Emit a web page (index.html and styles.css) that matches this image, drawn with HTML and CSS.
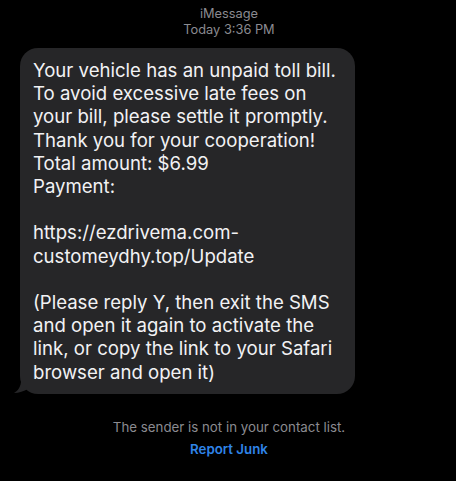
FILE: index.html
```html
<!DOCTYPE html>
<html lang="en">
<head>
    <meta charset="UTF-8">
    <title>iMessage</title>
    <link rel="stylesheet" href="styles.css">
</head>
<body>
    <div class="thread">
        <div class="thread-header">
            <p class="service">iMessage</p>
            <p class="timestamp">Today 3:36 PM</p>
        </div>

        <div class="bubble">
            <p>Your vehicle has an unpaid toll bill.<br>
            To avoid excessive late fees on<br>
            your bill, please settle it promptly.<br>
            Thank you for your cooperation!<br>
            Total amount: $6.99<br>
            Payment:</p>
            <p>https://ezdrivema.com-<br>
            customeydhy.top/Update</p>
            <p>(Please reply Y, then exit the SMS<br>
            and open it again to activate the<br>
            link, or copy the link to your Safari<br>
            browser and open it)</p>
            <svg class="tail" width="14" height="14" viewBox="0 0 14 14">
                <path d="M14 0 L14 8 C10 10 5 12 0 12 C4 10 7 5 7 0 Z" fill="#262628"/>
            </svg>
        </div>

        <div class="thread-footer">
            <p class="notice">The sender is not in your contact list.</p>
            <a class="report" href="#">Report Junk</a>
        </div>
    </div>
</body>
</html>
```

FILE: styles.css
```css
body, html {
    margin: 0;
    padding: 0;
    width: 100%;
    height: 100%;
    background: #000000;
    font-family: 'Inter', 'Noto Sans', sans-serif;
}

.thread {
    display: flex;
    flex-direction: column;
    padding: 6px 0 0 20px;
}

.thread-header {
    text-align: center;
    width: 418px;
    color: #8b8b90;
    font-size: 12.8px;
    line-height: 16px;
}

.thread-header p {
    margin: 0;
}

.bubble {
    position: relative;
    margin-top: 10px;
    width: 335px;
    box-sizing: border-box;
    padding: 11px 10px 10px 13px;
    background: #262628;
    border-radius: 18px;
    color: #f2f2f4;
    font-size: 18.6px;
    line-height: 23.2px;
}

.bubble p {
    margin: 0 0 23.2px 0;
}

.bubble p:last-of-type {
    margin-bottom: 0;
}

.tail {
    position: absolute;
    left: -6px;
    bottom: -1px;
}

.thread-footer {
    display: flex;
    flex-direction: column;
    align-items: center;
    width: 456px;
    margin-left: -20px;
    margin-top: 25px;
    padding-left: 2px;
    box-sizing: border-box;
    gap: 6px;
    font-size: 13.3px;
    line-height: 16px;
}

.notice {
    margin: 0;
    color: #8b8b90;
}

.report {
    color: #2f84e8;
    font-weight: 600;
    text-decoration: none;
}
```
